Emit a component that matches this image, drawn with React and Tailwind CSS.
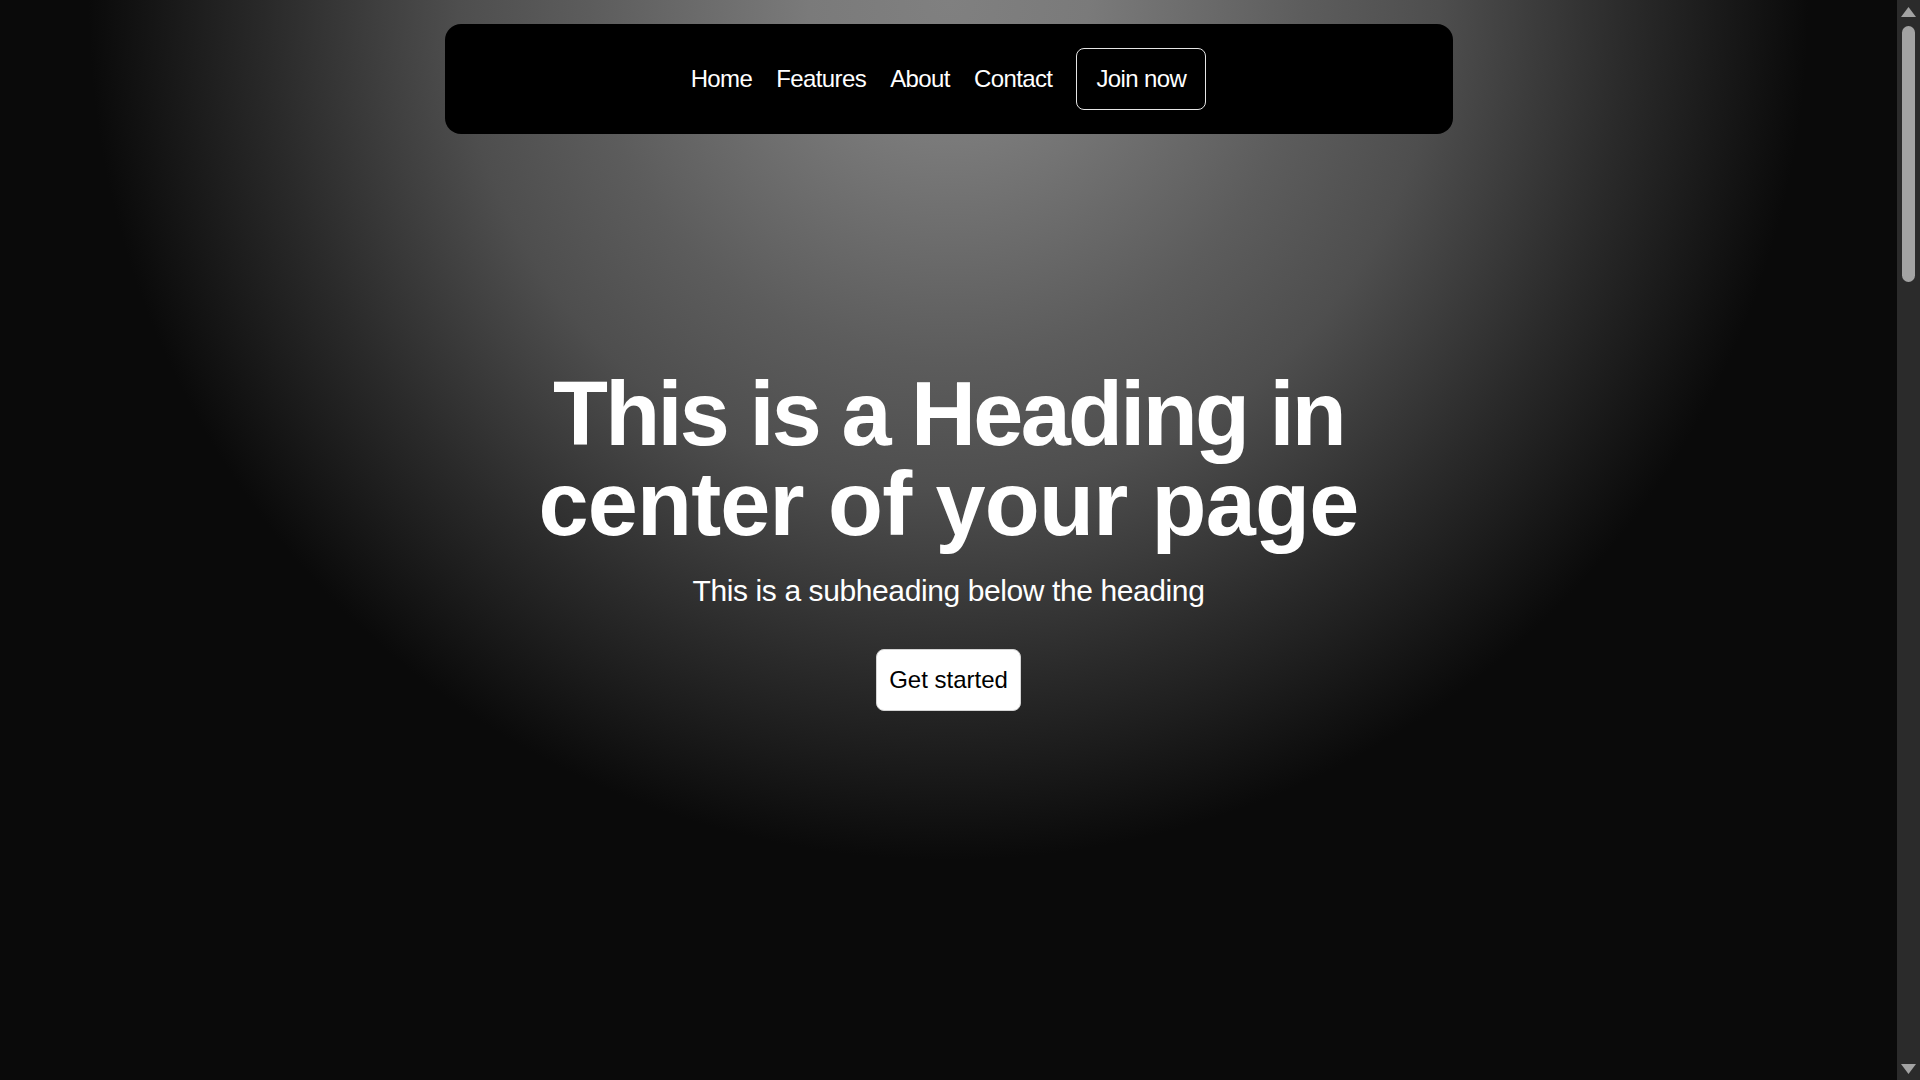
import React from 'react';

const links = ['Home', 'Features', 'About', 'Contact'];

const App = () => {
  return (
    <div className="h-screen flex overflow-hidden bg-[#0a0a0a] font-['Liberation_Sans',Arial,sans-serif] text-white">

      {/* ── Page ── */}
      <main className="relative flex-1 h-full">

        {/* Floating nav */}
        <div className="absolute inset-x-0 top-6 z-10 flex justify-center">
          <nav className="w-[1008px] rounded-2xl bg-black py-6 flex items-center justify-center gap-6">
            {links.map((l) => (
              <a key={l} href="#" className="text-2xl tracking-tight text-white">
                {l}
              </a>
            ))}
            <a
              href="#"
              className="h-[62px] px-[19px] flex items-center rounded-lg border border-[#e5e5e5] text-2xl tracking-tight text-white"
            >
              Join now
            </a>
          </nav>
        </div>

        {/* Hero */}
        <section className="h-full flex flex-col items-center justify-center bg-[radial-gradient(circle_at_50%_0%,#808080_0px,#7a7a7a_140px,#5c5c5c_360px,#4e4e4e_490px,#2a2a2a_680px,#0a0a0a_860px)]">
          <h1 className="text-center text-[90px] leading-none font-bold">
            <span className="tracking-[-2.7px]">This is a Heading in</span>
            <br />
            <span className="tracking-[-0.8px]">center of your page</span>
          </h1>
          <p className="mt-6 text-3xl leading-9 tracking-[-0.4px] text-white">
            This is a subheading below the heading
          </p>
          <button className="mt-10 h-[62px] px-3 rounded-lg border border-[#d4d4d4] bg-white text-2xl text-black">
            Get started
          </button>
        </section>
      </main>

      {/* ── Scrollbar ── */}
      <aside className="w-[23px] h-full bg-[#2b2b2b] flex flex-col items-center">
        <svg width="15" height="10" viewBox="0 0 15 10" className="mt-[7px]">
          <path d="M7.5 0 L15 10 L0 10 Z" fill="#a3a3a3" />
        </svg>
        <div className="mt-[9px] h-[256px] w-[13px] rounded-full bg-[#a3a3a3]" />
        <div className="flex-1" />
        <svg width="15" height="10" viewBox="0 0 15 10" className="mb-[6px]">
          <path d="M0 0 L15 0 L7.5 10 Z" fill="#a3a3a3" />
        </svg>
      </aside>
    </div>
  );
};

export default App;
